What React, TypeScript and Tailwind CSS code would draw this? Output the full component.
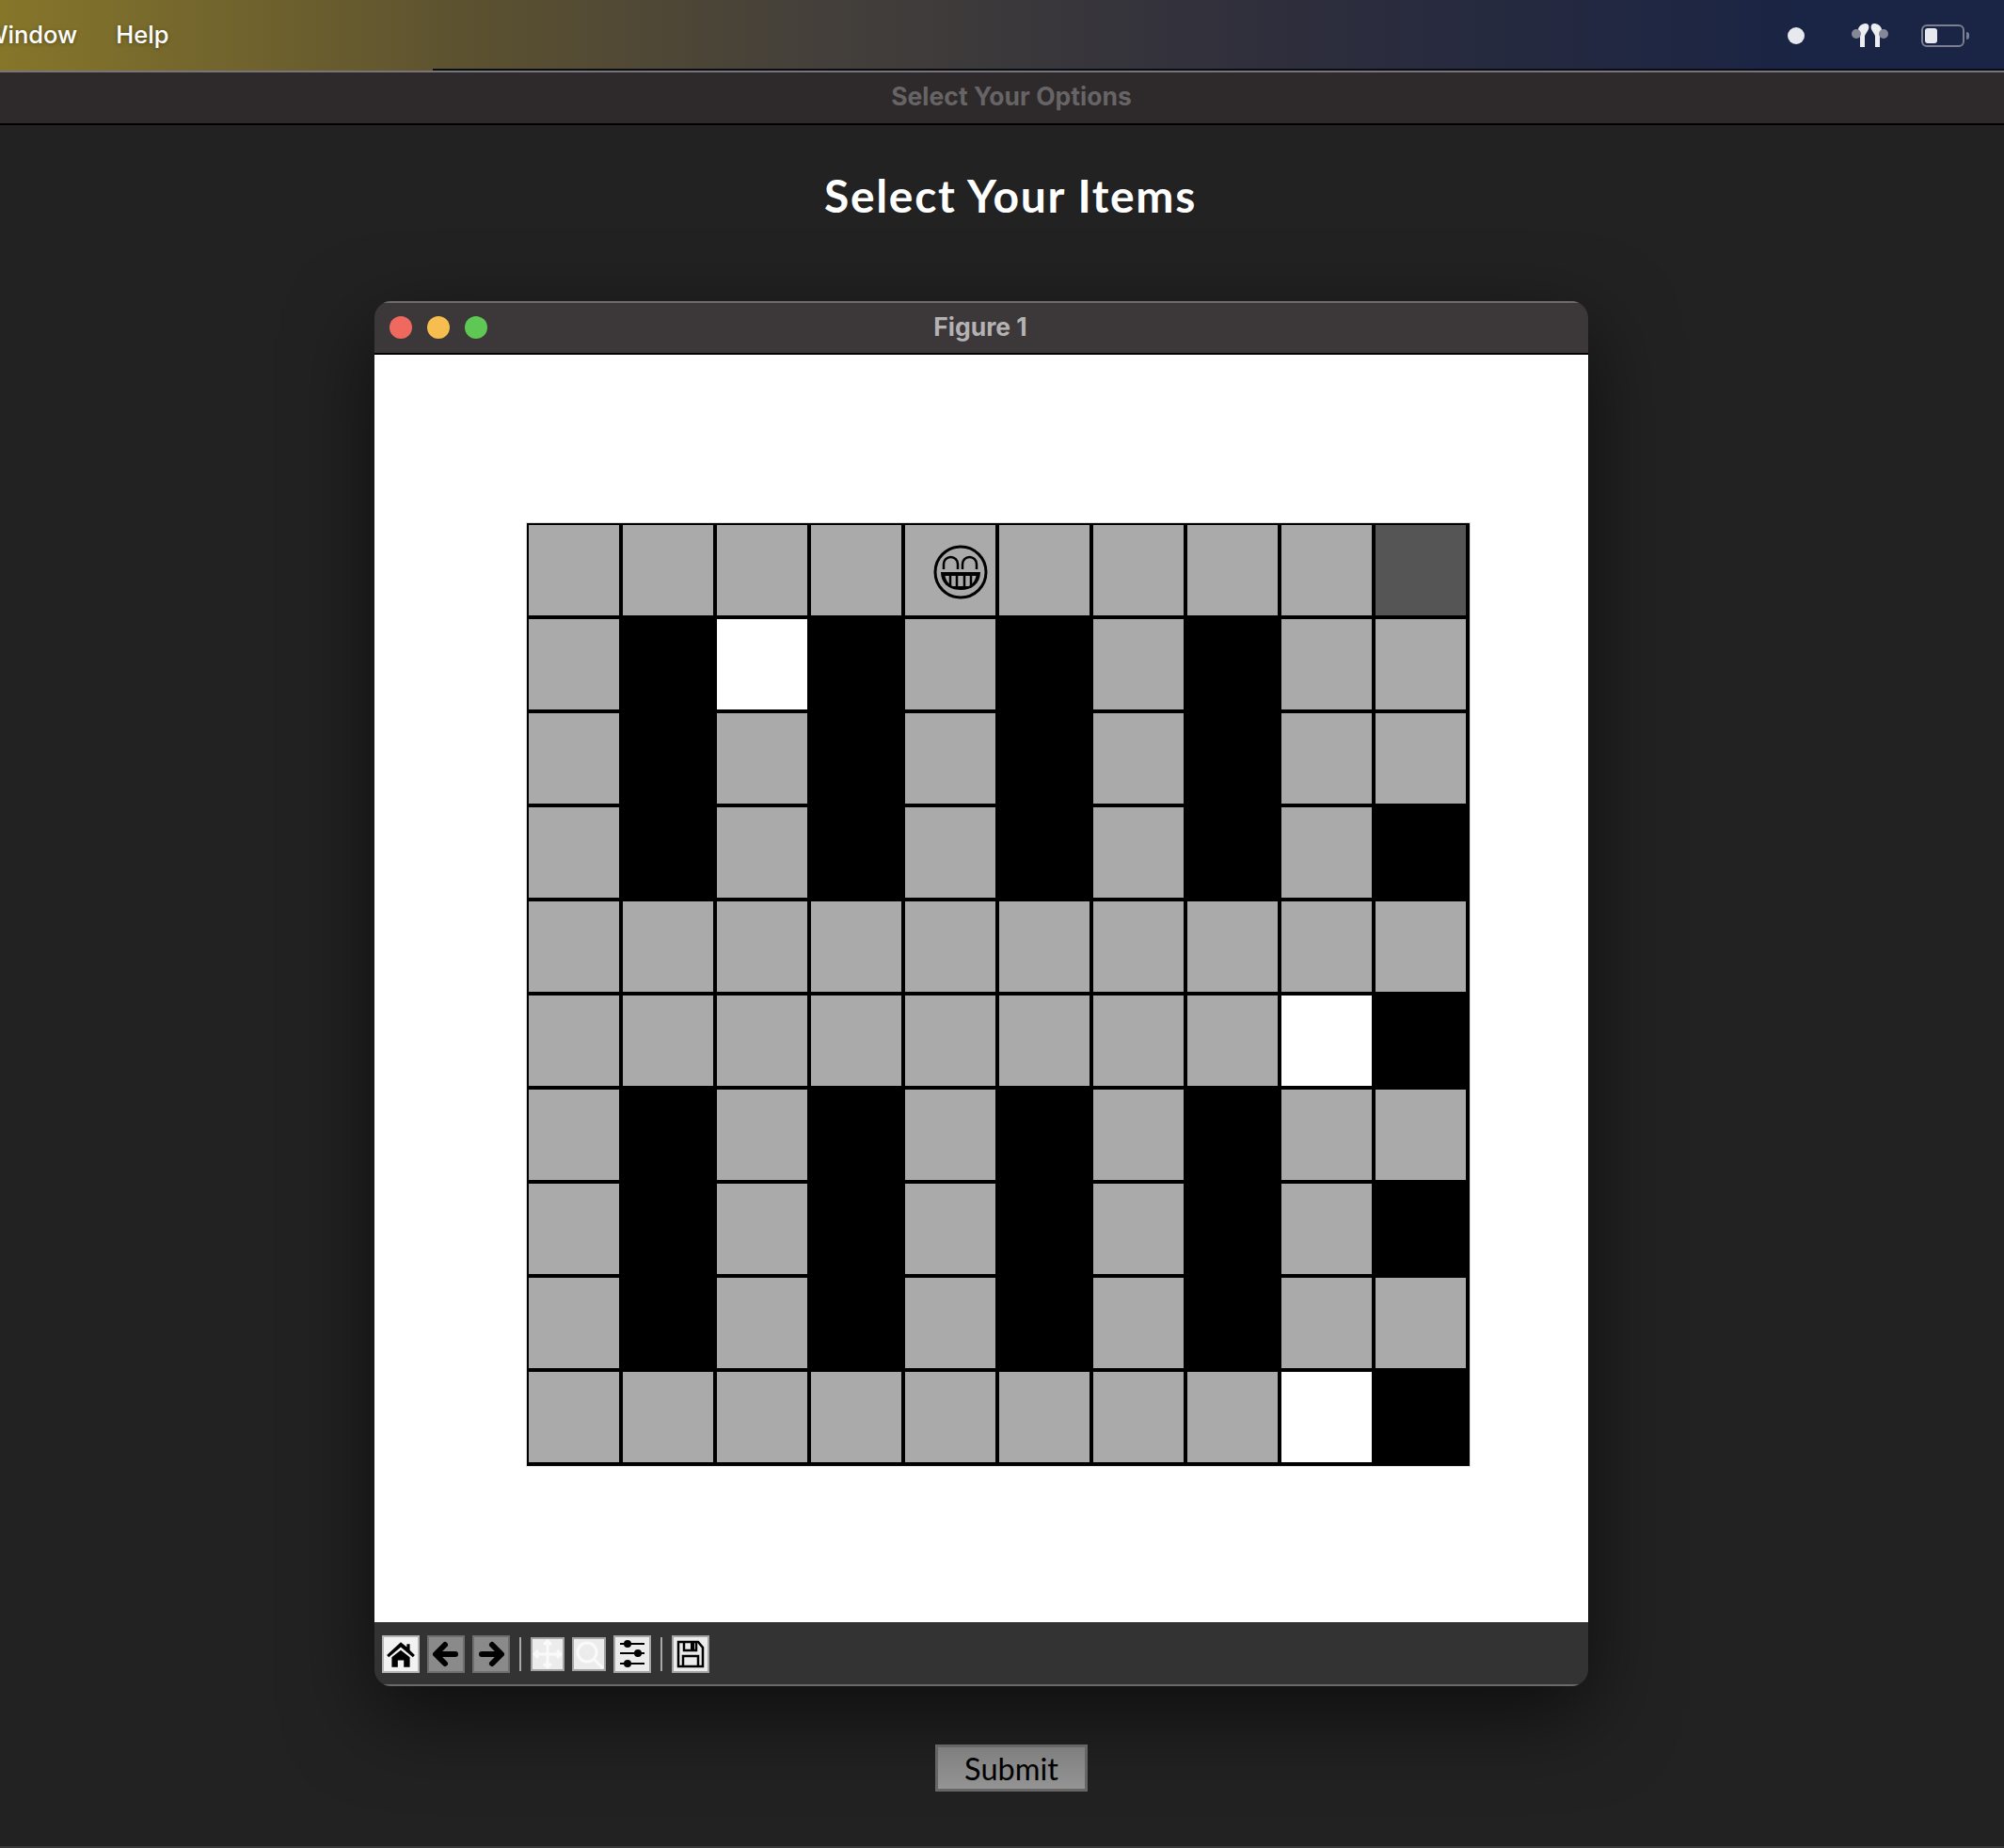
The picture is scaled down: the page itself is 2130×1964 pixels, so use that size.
const G = "#aaaaaa";
const rows = [
  "GGGGGGGGGD",
  "GBWBGBGBGG",
  "GBGBGBGBGG",
  "GBGBGBGBGB",
  "GGGGGGGGGG",
  "GGGGGGGGWB",
  "GBGBGBGBGG",
  "GBGBGBGBGB",
  "GBGBGBGBGG",
  "GGGGGGGGWB",
];

function Smiley() {
  return (
    <svg width="58" height="58" viewBox="0 0 58 58" fill="none" stroke="#000" strokeWidth="3">
      <circle cx="29" cy="29" r="27" />
      <path d="M11 26v-5.500a7.500 7.500 0 0 1 15 0V26M31 26v-5.500a7.500 7.500 0 0 1 15 0V26" strokeWidth="2.500" />
      <path d="M8 29h42c0 12-9 19-21 19S8 41 8 29z" fill="#000" stroke="none" />
      <path d="M12.500 33h33c-1 5-4 9-8 11H20.500c-4-2-7-6-8-11z" fill={G} stroke="none" />
      <path d="M18 32v13M25 32v15M33 32v15M40 32v13" strokeWidth="2.500" />
    </svg>
  );
}

function Cell({ c, i }: { c: string; i: number }) {
  const bg = c === "G" ? "bg-[#aaaaaa]" : c === "D" ? "bg-[#555555]" : c === "W" ? "bg-white" : "bg-black";
  return (
    <div className={`${bg} flex items-center justify-center`}>
      {i === 4 ? <div className="pl-[22px] pt-[3px]"><Smiley /></div> : null}
    </div>
  );
}

function ToolBtn({ active, dim, children, w = 40, h = 40 }: { active?: boolean; dim?: boolean; children?: React.ReactNode; w?: number; h?: number }) {
  return (
    <div
      className={`flex items-center justify-center border-2 ${dim ? "border-[#6e6e6e] bg-[#8a8a8a]" : active ? "border-[#b5b5b5] bg-[#f2f2f2]" : "border-[#a4a4a4] bg-[#ececec]"}`}
      style={{ width: w, height: h }}
    >
      {children}
    </div>
  );
}

export default function App() {
  return (
    <div className="w-[2130px] h-[1964px] bg-[#222222] flex flex-col overflow-hidden font-['Inter',sans-serif]">
      <div className="h-[75px] shrink-0 relative flex items-center justify-between bg-[linear-gradient(90deg,#86762a_0%,#5c5230_23%,#45403a_40%,#2e2e3c_64%,#1a2444_90%,#1a2444_100%)] text-white">
        <div className="flex items-center text-[25.500px] font-medium ml-[-17px] gap-[41px] [text-shadow:0_1px_4px_rgba(0,0,0,.35)]">
          <span>Window</span>
          <span>Help</span>
        </div>
        <div className="flex items-center mr-[37px]">
          <div className="w-[18px] h-[18px] rounded-full bg-[#e8e9ee] mr-[50px]" />
          <svg width="39" height="25" viewBox="0 0 39 25" className="mr-[35px]">
            <path d="M7 6C8 2 12 0 15 0c3 0 4 3 3 6-1 2-3 5-4 7H9z" fill="#eceef2" />
            <path d="M32 6c-1-4-5-6-8-6-3 0-4 3-3 6 1 2 3 5 4 7h5z" fill="#eceef2" />
            <rect x="9" y="13" width="5" height="12" fill="#eceef2" />
            <rect x="25" y="13" width="5" height="12" fill="#eceef2" />
            <circle cx="5" cy="11" r="5" fill="#858897" />
            <circle cx="34" cy="11" r="5" fill="#858897" />
          </svg>
          <div className="flex items-center">
            <div className="w-[46px] h-[24px] rounded-[6px] border-2 border-[#7b8091] p-[2px] flex">
              <div className="w-[13px] h-full rounded-[3px] bg-[#e8e9ee]" />
            </div>
            <div className="w-[3px] h-[8px] bg-[#7b8091] ml-[2px] rounded-r-full" />
          </div>
        </div>
        <div className="absolute bottom-0 left-[460px] right-0 h-[2px] bg-[#0b0d14]" />
      </div>
      <div className="h-[58px] shrink-0 bg-[#2e292b] border-t-2 border-t-[#77757a] border-b-2 border-b-black flex items-center justify-center text-[26.500px] font-bold text-[#676466] pl-[20px] pb-[2px]">
        Select Your Options
      </div>
      <div className="flex-1 flex flex-col items-center relative border-b-2 border-b-[#3a3a3a]">
        <h1 className="text-[48px] leading-[58px] font-bold text-white mt-[46px] mb-[1px] ml-[18px] font-['Lato',sans-serif] tracking-[1.700px]">Select Your Items</h1>
        <div className="w-[1290px] h-[1472px] mt-[82px] ml-[-44px] rounded-[18px] overflow-hidden flex flex-col shadow-[0_30px_90px_rgba(0,0,0,0.6)]">
          <div className="h-[57px] shrink-0 bg-[#3c3739] border-t-2 border-t-[#6f6c6d] border-b-2 border-b-black flex items-center relative pb-[1px]">
            <div className="flex items-center gap-[16px] ml-[16px]">
              <div className="w-[24px] h-[24px] rounded-full bg-[#f0695f]" />
              <div className="w-[24px] h-[24px] rounded-full bg-[#f6bd4f]" />
              <div className="w-[24px] h-[24px] rounded-full bg-[#5fc754]" />
            </div>
            <div className="absolute inset-x-0 text-center text-[26.500px] font-bold text-[#b4b2b3] pr-[2px] pb-[1px]">Figure 1</div>
          </div>
          <div className="flex-1 bg-white flex items-start justify-start pt-[179px] pl-[162px]">
            <div className="w-[1002px] h-[1002px] bg-black pt-[2px] pl-[2px] pr-[4px] pb-[4px] grid grid-cols-10 grid-rows-10 gap-[4px] outline-1 outline-[#dddddd]">
              {rows.flatMap((r, ri) =>
                r.split("").map((c, ci) => <Cell key={`${ri}-${ci}`} c={c} i={ri === 0 ? ci : -1} />)
              )}
            </div>
          </div>
          <div className="h-[68px] shrink-0 bg-[#333333] border-b-2 border-b-[#6a6a6a] flex items-center pl-[8px] pt-[2px]">
            <ToolBtn active>
              <svg width="32" height="32" viewBox="0 0 30 30"><path d="M15 3 1 16l2 2L15 8l12 10 2-2-5-5V5h-3v3z" fill="#000" /><path d="M6 18 15 11l9 7v10h-6v-7h-6v7H6z" fill="#000" /></svg>
            </ToolBtn>
            <div className="w-[8px]" />
            <ToolBtn dim>
              <svg width="32" height="32" viewBox="0 0 32 32" fill="none" stroke="#000" strokeWidth="6" strokeLinecap="round" strokeLinejoin="round"><path d="M26 16H6M15 6 5 16l10 10" /></svg>
            </ToolBtn>
            <div className="w-[8px]" />
            <ToolBtn dim>
              <svg width="32" height="32" viewBox="0 0 32 32" fill="none" stroke="#000" strokeWidth="6" strokeLinecap="round" strokeLinejoin="round"><path d="M6 16h20M17 6l10 10-10 10" /></svg>
            </ToolBtn>
            <div className="w-[2px] h-[36px] bg-[#a8a8a8] ml-[10px] mr-[10px]" />
            <ToolBtn w={36} h={36}>
              <svg width="32" height="32" viewBox="0 0 32 32" fill="none" stroke="#fafafa" strokeWidth="3"><path d="M16 1v30M1 16h30M12 6l4-4 4 4M12 26l4 4 4-4M6 12l-4 4 4 4M26 12l4 4-4 4" /></svg>
            </ToolBtn>
            <div className="w-[8px]" />
            <ToolBtn w={36} h={36}>
              <svg width="32" height="32" viewBox="0 0 32 32" fill="none" stroke="#fafafa" strokeWidth="3"><circle cx="14" cy="14" r="10" /><path d="m22 22 9 9" /></svg>
            </ToolBtn>
            <div className="w-[8px]" />
            <ToolBtn>
              <svg width="32" height="32" viewBox="0 0 32 32" fill="#000"><path d="M3 5h26M3 15h26M3 26h26" stroke="#000" strokeWidth="2" /><circle cx="11" cy="5" r="4" /><circle cx="22" cy="15" r="4" /><circle cx="11" cy="26" r="4" /></svg>
            </ToolBtn>
            <div className="w-[2px] h-[36px] bg-[#a8a8a8] ml-[10px] mr-[10px]" />
            <ToolBtn>
              <svg width="32" height="32" viewBox="0 0 32 32" fill="none" stroke="#000" strokeWidth="2.500"><path d="M3 3h21l5 6v20H3z" /><path d="M9 3v9h13V3" /><path d="M8 29V18h16v11" /><rect x="16" y="4" width="4" height="7" fill="#000" stroke="none" /></svg>
            </ToolBtn>
          </div>
        </div>
        <button className="w-[162px] h-[50px] mt-[62px] ml-[20px] bg-[linear-gradient(180deg,#7f7f7f,#949494)] border-[3px] border-[#666666] text-black text-[32.500px] leading-none pt-[2px] font-['Lato',sans-serif]">Submit</button>
      </div>
    </div>
  );
}
